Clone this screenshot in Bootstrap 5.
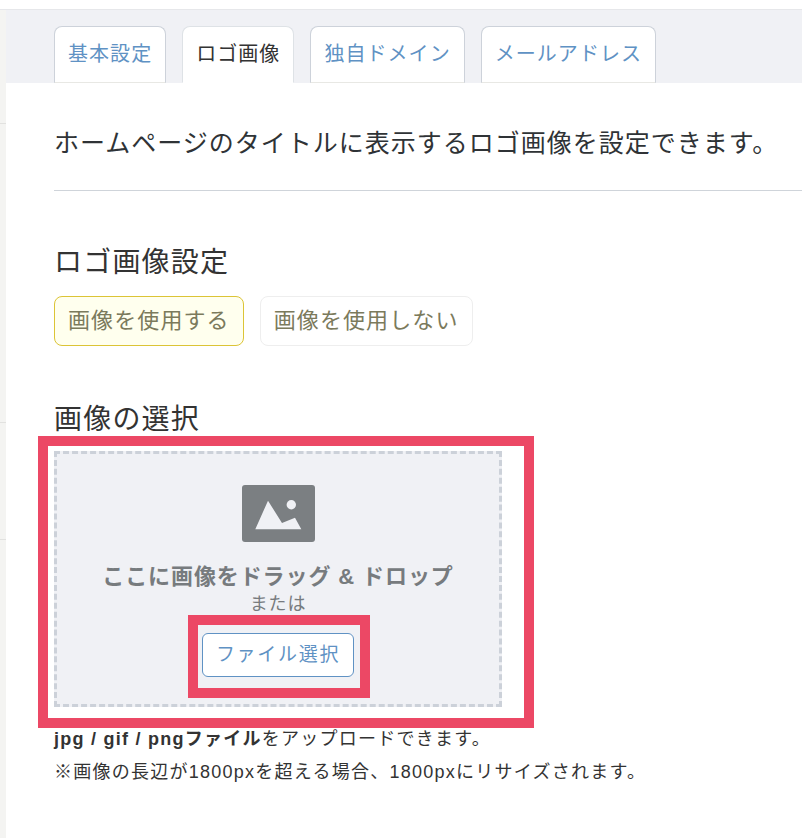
<!DOCTYPE html>
<html lang="ja">
<head>
    <meta charset="UTF-8">
    <meta name="viewport" content="width=device-width, initial-scale=1.0">
    <title>ロゴ画像</title>
    <link href="https://cdn.jsdelivr.net/npm/bootstrap@5.3.0/dist/css/bootstrap.min.css" rel="stylesheet">
    <style>
        html, body { height: 838px; overflow: hidden; }
        body { font-family: "Liberation Sans", "Noto Sans CJK JP", sans-serif; color: #333; background: #fff; }
        .side-rail { width: 6px; flex: none; background: #f4f4f2; }
        .rail-cell { border-bottom: 1px solid #e2e2e0; }
        .rail-a { height: 124px; }
        .rail-b { height: 299px; }
        .rail-c { height: 117px; }
        .top-strip { height: 10px; background: #fff; border-bottom: 1px solid #e6e7ea; margin-left: -6px; }
        .tab-band { height: 73px; background: #f0f1f5; padding: 16px 0 0 48px; }
        .tab-band .nav-tabs { border: 0; gap: 16px; }
        .tab-band .nav-link { height: 57px; padding: 0 13px; margin: 0; font-size: 20px; line-height: 55px; letter-spacing: 1.05px; color: #5f92c4; background: #fff; border: 1px solid #cdd2da; border-bottom: 1px solid #e8e8e4; border-radius: 8px 8px 0 0; }
        .tab-band .nav-link.active { color: #333; border-bottom-color: #fff; }
        .page-body { padding: 0 0 0 48px; }
        .intro-text { font-size: 25px; line-height: 36px; letter-spacing: 1px; padding-top: 42px; margin: 0; color: #2f3336; white-space: nowrap; }
        .intro-rule { margin: 29px 0 0; border: 0; border-top: 1px solid #cfd4da; opacity: 1; }
        .sect-title { font-size: 28px; line-height: 40px; font-weight: 400; margin: 52px 0 0; letter-spacing: 1.2px; color: #333; }
        .sect-title.second { margin-top: 54px; }
        .choice-row { gap: 16px; margin-top: 13px; }
        .choice-btn { height: 50px; padding: 0 13px; font-size: 22px; line-height: 42px; letter-spacing: 1.1px; color: #7b7a5c; background: #fff; border: 1px solid #eeeeee; border-radius: 8px; }
        .choice-btn.picked { background: #ffffee; border-color: #dcc436; }
        .drop-wrap { width: 448px; margin-top: 11px; }
        .drop-zone { height: 256px; background: #f0f1f5; border: 3px dashed #ccd1d9; padding-top: 31px; color: #777b7e; }
        .drop-icon { display: block; width: 73px; height: 57px; flex: none; }
        .drop-main { font-size: 22px; line-height: 30px; font-weight: 700; letter-spacing: .9px; margin-top: 20px; white-space: nowrap; }
        .drop-or { font-size: 18px; line-height: 22px; letter-spacing: .8px; margin-top: 1px; }
        .file-btn { width: 152px; height: 44px; flex: none; margin-top: 18px; padding: 0; font-size: 19px; line-height: 40px; letter-spacing: 1.7px; color: #5f92c4; background: #fff; border: 1px solid #5f92c4; border-radius: 6px; }
        .mark-outer { position: absolute; left: -16px; top: -15px; width: 496px; height: 292px; border: 10px solid #ec4865; pointer-events: none; }
        .mark-inner { position: absolute; left: 134px; top: 164px; width: 182px; height: 83px; border: 10px solid #ec4865; pointer-events: none; }
        .note-text { font-size: 18px; line-height: 33px; letter-spacing: 1.25px; margin: 16px 0 0; color: #333; white-space: nowrap; }
        .note-text + .note-text { margin-top: 0; }
    </style>
</head>
<body class="d-flex">
<div class="side-rail">
    <div class="rail-cell rail-a"></div>
    <div class="rail-cell rail-b"></div>
    <div class="rail-cell rail-c"></div>
</div>
<div class="flex-grow-1">
    <div class="top-strip"></div>
    <div class="tab-band">
        <ul class="nav nav-tabs">
            <li class="nav-item"><a class="nav-link" href="#">基本設定</a></li>
            <li class="nav-item"><a class="nav-link active" href="#">ロゴ画像</a></li>
            <li class="nav-item"><a class="nav-link" href="#">独自ドメイン</a></li>
            <li class="nav-item"><a class="nav-link" href="#">メールアドレス</a></li>
        </ul>
    </div>
    <div class="page-body">
        <p class="intro-text">ホームページのタイトルに表示するロゴ画像を設定できます。</p>
        <hr class="intro-rule">

        <h3 class="sect-title">ロゴ画像設定</h3>
        <div class="d-flex choice-row">
            <button class="btn choice-btn picked" type="button">画像を使用する</button>
            <button class="btn choice-btn" type="button">画像を使用しない</button>
        </div>

        <h3 class="sect-title second">画像の選択</h3>
        <div class="drop-wrap position-relative">
            <div class="drop-zone d-flex flex-column align-items-center">
                <svg class="drop-icon" viewBox="0 0 73 57" aria-hidden="true">
                    <rect width="73" height="57" rx="3" fill="#7b7f82"/>
                    <path d="M13.3 44.3 L26 15.7 L40 38 L53 32.7 L59.3 44.3 Z" fill="#f0f1f5"/>
                    <circle cx="49.3" cy="19.7" r="4.7" fill="#f0f1f5"/>
                </svg>
                <div class="drop-main">ここに画像をドラッグ &amp; ドロップ</div>
                <div class="drop-or">または</div>
                <button class="btn file-btn" type="button">ファイル選択</button>
            </div>
            <div class="mark-outer"></div>
            <div class="mark-inner"></div>
        </div>
        <p class="note-text"><strong>jpg / gif / pngファイル</strong>をアップロードできます。</p>
        <p class="note-text">※画像の長辺が1800pxを超える場合、1800pxにリサイズされます。</p>
    </div>
</div>
<script src="https://cdn.jsdelivr.net/npm/bootstrap@5.3.0/dist/js/bootstrap.bundle.min.js"></script>
</body>
</html>
